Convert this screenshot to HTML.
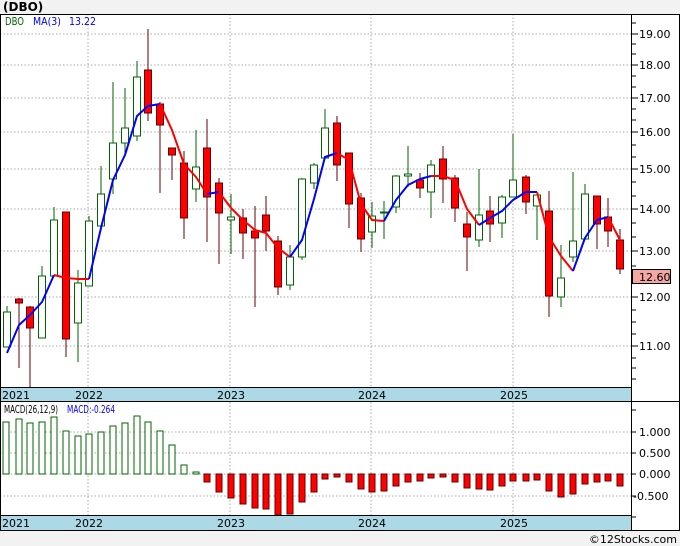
<!DOCTYPE html>
<html><head><meta charset="utf-8"><style>
html,body{margin:0;padding:0;background:#f2f2f2;}
svg{display:block;font-family:"DejaVu Sans","Liberation Sans",sans-serif;}
</style></head><body>
<svg width="680" height="546" viewBox="0 0 680 546" xmlns="http://www.w3.org/2000/svg">
<rect x="0" y="0" width="680" height="546" fill="#f2f2f2"/>
<text x="3" y="11" font-size="12" font-weight="bold" fill="#000">(DBO)</text>
<rect x="0" y="14" width="680" height="517" fill="#fff"/>
<g stroke="#aaa" stroke-dasharray="1.5,2" stroke-width="1">
<line x1="0" y1="34" x2="631" y2="34"/><line x1="0" y1="65" x2="631" y2="65"/><line x1="0" y1="98" x2="631" y2="98"/><line x1="0" y1="132" x2="631" y2="132"/><line x1="0" y1="169" x2="631" y2="169"/><line x1="0" y1="209" x2="631" y2="209"/><line x1="0" y1="251" x2="631" y2="251"/><line x1="0" y1="297" x2="631" y2="297"/><line x1="0" y1="346" x2="631" y2="346"/>
<line x1="88" y1="14" x2="88" y2="387"/><line x1="230" y1="14" x2="230" y2="387"/><line x1="371" y1="14" x2="371" y2="387"/><line x1="513" y1="14" x2="513" y2="387"/>
<line x1="0" y1="432" x2="631" y2="432"/><line x1="0" y1="453" x2="631" y2="453"/><line x1="0" y1="474" x2="631" y2="474"/><line x1="0" y1="496" x2="631" y2="496"/>
<line x1="88" y1="402" x2="88" y2="515"/><line x1="230" y1="402" x2="230" y2="515"/><line x1="371" y1="402" x2="371" y2="515"/><line x1="513" y1="402" x2="513" y2="515"/>
</g>
<g stroke="#006400" stroke-width="1" fill="#fff">
<line x1="7" y1="306" x2="7" y2="347"/><rect x="3.5" y="312" width="7" height="35"/>
<line x1="42" y1="266" x2="42" y2="338"/><rect x="38.5" y="276" width="7" height="62"/>
<line x1="54" y1="207" x2="54" y2="276"/><rect x="50.5" y="220" width="7" height="56"/>
<line x1="78" y1="270" x2="78" y2="362"/><rect x="74.5" y="283" width="7" height="40"/>
<line x1="89" y1="216" x2="89" y2="286"/><rect x="85.5" y="221" width="7" height="65"/>
<line x1="101" y1="166" x2="101" y2="226"/><rect x="97.5" y="194" width="7" height="32"/>
<line x1="113" y1="82" x2="113" y2="194"/><rect x="109.5" y="143" width="7" height="36"/>
<line x1="125" y1="88" x2="125" y2="153"/><rect x="121.5" y="128" width="7" height="15"/>
<line x1="137" y1="61" x2="137" y2="141"/><rect x="133.5" y="77" width="7" height="59"/>
<line x1="196" y1="130" x2="196" y2="202"/><rect x="192.5" y="167" width="7" height="22"/>
<line x1="231" y1="194" x2="231" y2="254"/><rect x="227.5" y="217" width="7" height="3"/>
<line x1="290" y1="245" x2="290" y2="290"/><rect x="286.5" y="257" width="7" height="28"/>
<line x1="302" y1="178" x2="302" y2="260"/><rect x="298.5" y="179" width="7" height="78"/>
<line x1="314" y1="163" x2="314" y2="189"/><rect x="310.5" y="165" width="7" height="18"/>
<line x1="325" y1="109" x2="325" y2="158"/><rect x="321.5" y="128" width="7" height="30"/>
<line x1="372" y1="202" x2="372" y2="248"/><rect x="368.5" y="216" width="7" height="16"/>
<line x1="384" y1="201" x2="384" y2="239"/><rect x="380.5" y="212" width="7" height="1"/>
<line x1="396" y1="175" x2="396" y2="213"/><rect x="392.5" y="176" width="7" height="31"/>
<line x1="408" y1="146" x2="408" y2="187"/><rect x="404.5" y="174" width="7" height="2"/>
<line x1="431" y1="160" x2="431" y2="218"/><rect x="427.5" y="165" width="7" height="27"/>
<line x1="479" y1="169" x2="479" y2="247"/><rect x="475.5" y="215" width="7" height="25"/>
<line x1="502" y1="195" x2="502" y2="238"/><rect x="498.5" y="197" width="7" height="26"/>
<line x1="513" y1="134" x2="513" y2="197"/><rect x="509.5" y="180" width="7" height="17"/>
<line x1="537" y1="195" x2="537" y2="240"/><rect x="533.5" y="195" width="7" height="11"/>
<line x1="561" y1="245" x2="561" y2="307"/><rect x="557.5" y="278" width="7" height="19"/>
<line x1="573" y1="172" x2="573" y2="262"/><rect x="569.5" y="241" width="7" height="16"/>
<line x1="585" y1="184" x2="585" y2="239"/><rect x="581.5" y="194" width="7" height="45"/>
</g>
<g stroke="#600" stroke-width="1" fill="#f00">
<line x1="19" y1="298" x2="19" y2="368"/><rect x="15.5" y="299" width="7" height="4"/>
<line x1="30" y1="306" x2="30" y2="387"/><rect x="26.5" y="307" width="7" height="21"/>
<line x1="66" y1="212" x2="66" y2="357"/><rect x="62.5" y="212" width="7" height="127"/>
<line x1="148" y1="29" x2="148" y2="121"/><rect x="144.5" y="70" width="7" height="43"/>
<line x1="160" y1="102" x2="160" y2="193"/><rect x="156.5" y="104" width="7" height="21"/>
<line x1="172" y1="148" x2="172" y2="180"/><rect x="168.5" y="148" width="7" height="7"/>
<line x1="184" y1="151" x2="184" y2="239"/><rect x="180.5" y="163" width="7" height="55"/>
<line x1="207" y1="119" x2="207" y2="242"/><rect x="203.5" y="148" width="7" height="49"/>
<line x1="219" y1="178" x2="219" y2="264"/><rect x="215.5" y="183" width="7" height="30"/>
<line x1="243" y1="209" x2="243" y2="259"/><rect x="239.5" y="218" width="7" height="15"/>
<line x1="255" y1="206" x2="255" y2="307"/><rect x="251.5" y="231" width="7" height="7"/>
<line x1="266" y1="196" x2="266" y2="251"/><rect x="262.5" y="215" width="7" height="16"/>
<line x1="278" y1="236" x2="278" y2="295"/><rect x="274.5" y="241" width="7" height="46"/>
<line x1="337" y1="116" x2="337" y2="181"/><rect x="333.5" y="123" width="7" height="42"/>
<line x1="349" y1="153" x2="349" y2="228"/><rect x="345.5" y="153" width="7" height="51"/>
<line x1="361" y1="193" x2="361" y2="252"/><rect x="357.5" y="198" width="7" height="41"/>
<line x1="420" y1="173" x2="420" y2="198"/><rect x="416.5" y="180" width="7" height="8"/>
<line x1="443" y1="146" x2="443" y2="203"/><rect x="439.5" y="159" width="7" height="20"/>
<line x1="455" y1="175" x2="455" y2="222"/><rect x="451.5" y="178" width="7" height="30"/>
<line x1="467" y1="212" x2="467" y2="271"/><rect x="463.5" y="224" width="7" height="13"/>
<line x1="490" y1="196" x2="490" y2="242"/><rect x="486.5" y="211" width="7" height="13"/>
<line x1="526" y1="175" x2="526" y2="214"/><rect x="522.5" y="177" width="7" height="25"/>
<line x1="549" y1="191" x2="549" y2="317"/><rect x="545.5" y="211" width="7" height="85"/>
<line x1="597" y1="196" x2="597" y2="249"/><rect x="593.5" y="196" width="7" height="28"/>
<line x1="608" y1="198" x2="608" y2="247"/><rect x="604.5" y="217" width="7" height="14"/>
<line x1="620" y1="229" x2="620" y2="274"/><rect x="616.5" y="240" width="7" height="29"/>
</g>
<g fill="none" stroke-width="2" stroke-linejoin="round">
<polyline stroke="#00f" points="7,353 19,325 30,315 42,302 54,275"/>
<polyline stroke="#f00" points="54,275 66,278 78,279 89,279"/>
<polyline stroke="#00f" points="89,279 101,228 113,180 125,155 137,116 148,106 160,104"/>
<polyline stroke="#f00" points="160,104 172,130 184,164 196,177 207,194"/>
<polyline stroke="#00f" points="207,194 219,192"/>
<polyline stroke="#f00" points="219,192 231,208 243,220 255,230 266,233 278,248 290,257"/>
<polyline stroke="#00f" points="290,257 302,240 314,199 325,157 337,153"/>
<polyline stroke="#f00" points="337,153 349,160 361,204 372,220 384,221"/>
<polyline stroke="#00f" points="384,221 396,200 408,185 420,179 431,176"/>
<polyline stroke="#f00" points="431,176 443,176 455,180 467,209 479,225"/>
<polyline stroke="#00f" points="479,225 490,218 502,211 513,200 526,192 537,192"/>
<polyline stroke="#f00" points="537,192 549,237 561,256 573,271"/>
<polyline stroke="#00f" points="573,271 585,238 597,220 608,217"/>
<polyline stroke="#f00" points="608,217 620,240"/>
</g>
<g stroke="#006400" fill="#fff">
<rect x="3" y="422" width="6" height="52"/><rect x="16" y="419" width="6" height="55"/><rect x="27" y="423" width="6" height="51"/><rect x="39" y="422" width="6" height="52"/><rect x="51" y="417" width="6" height="57"/><rect x="63" y="431" width="6" height="43"/><rect x="75" y="436" width="6" height="38"/><rect x="86" y="434" width="6" height="40"/><rect x="98" y="432" width="6" height="42"/><rect x="110" y="426" width="6" height="48"/><rect x="122" y="423" width="6" height="51"/><rect x="134" y="416" width="6" height="58"/><rect x="145" y="422" width="6" height="52"/><rect x="157" y="431" width="6" height="43"/><rect x="169" y="445" width="6" height="29"/><rect x="181" y="465" width="6" height="9"/><rect x="193" y="472" width="6" height="2"/>
</g>
<g stroke="#600" fill="#f00">
<rect x="204" y="474" width="6" height="8"/><rect x="216" y="474" width="6" height="18"/><rect x="228" y="474" width="6" height="24"/><rect x="240" y="474" width="6" height="30"/><rect x="252" y="474" width="6" height="34"/><rect x="263" y="474" width="6" height="35"/><rect x="275" y="474" width="6" height="41"/><rect x="287" y="474" width="6" height="40"/><rect x="299" y="474" width="6" height="28"/><rect x="311" y="474" width="6" height="18"/><rect x="322" y="474" width="6" height="5"/><rect x="334" y="474" width="6" height="3"/><rect x="346" y="474" width="6" height="8"/><rect x="358" y="474" width="6" height="15"/><rect x="369" y="474" width="6" height="18"/><rect x="381" y="474" width="6" height="17"/><rect x="393" y="474" width="6" height="12"/><rect x="405" y="474" width="6" height="8"/><rect x="417" y="474" width="6" height="7"/><rect x="428" y="474" width="6" height="4"/><rect x="440" y="474" width="6" height="3"/><rect x="452" y="474" width="6" height="8"/><rect x="464" y="474" width="6" height="14"/><rect x="476" y="474" width="6" height="15"/><rect x="487" y="474" width="6" height="16"/><rect x="499" y="474" width="6" height="12"/><rect x="510" y="474" width="6" height="7"/><rect x="523" y="474" width="6" height="7"/><rect x="534" y="474" width="6" height="6"/><rect x="546" y="474" width="6" height="17"/><rect x="558" y="474" width="6" height="23"/><rect x="570" y="474" width="6" height="20"/><rect x="582" y="474" width="6" height="10"/><rect x="594" y="474" width="6" height="8"/><rect x="605" y="474" width="6" height="7"/><rect x="617" y="474" width="6" height="12"/>
</g>
<rect x="0" y="387" width="631" height="15" fill="#add8e6"/>
<rect x="0" y="515" width="631" height="15" fill="#add8e6"/>
<g stroke="#000" stroke-width="1">
<line x1="0" y1="14.5" x2="680" y2="14.5"/>
<line x1="0" y1="387.5" x2="631" y2="387.5"/>
<line x1="0" y1="401.5" x2="680" y2="401.5"/>
<line x1="0" y1="515.5" x2="631" y2="515.5"/>
<line x1="0" y1="530.5" x2="680" y2="530.5"/>
<line x1="631.5" y1="14" x2="631.5" y2="531"/>
<line x1="679.5" y1="14" x2="679.5" y2="531"/>
<line x1="0.5" y1="14" x2="0.5" y2="531"/>
</g>
<g stroke="#000">
<line x1="631" y1="23" x2="636" y2="23"/><line x1="631" y1="44" x2="636" y2="44"/><line x1="631" y1="54" x2="636" y2="54"/><line x1="631" y1="76" x2="636" y2="76"/><line x1="631" y1="87" x2="636" y2="87"/><line x1="631" y1="109" x2="636" y2="109"/><line x1="631" y1="120" x2="636" y2="120"/><line x1="631" y1="145" x2="636" y2="145"/><line x1="631" y1="157" x2="636" y2="157"/><line x1="631" y1="182" x2="636" y2="182"/><line x1="631" y1="196" x2="636" y2="196"/><line x1="631" y1="223" x2="636" y2="223"/><line x1="631" y1="237" x2="636" y2="237"/><line x1="631" y1="266" x2="636" y2="266"/><line x1="631" y1="310" x2="636" y2="310"/><line x1="631" y1="322" x2="636" y2="322"/><line x1="631" y1="334" x2="636" y2="334"/><line x1="631" y1="358" x2="636" y2="358"/><line x1="631" y1="368" x2="636" y2="368"/><line x1="631" y1="379" x2="636" y2="379"/>
<line x1="631" y1="34" x2="638" y2="34"/><line x1="631" y1="65" x2="638" y2="65"/><line x1="631" y1="98" x2="638" y2="98"/><line x1="631" y1="132" x2="638" y2="132"/><line x1="631" y1="169" x2="638" y2="169"/><line x1="631" y1="209" x2="638" y2="209"/><line x1="631" y1="251" x2="638" y2="251"/><line x1="631" y1="297" x2="638" y2="297"/><line x1="631" y1="346" x2="638" y2="346"/>
<line x1="631" y1="432" x2="636" y2="432"/><line x1="631" y1="453" x2="636" y2="453"/><line x1="631" y1="474" x2="636" y2="474"/><line x1="631" y1="496" x2="636" y2="496"/><line x1="631" y1="410" x2="636" y2="410"/><line x1="631" y1="517" x2="636" y2="517"/>
</g>
<g font-size="11" fill="#000">
<text x="639" y="38">19.00</text><text x="639" y="69">18.00</text><text x="639" y="102">17.00</text><text x="639" y="136">16.00</text><text x="639" y="173">15.00</text><text x="639" y="213">14.00</text><text x="639" y="255">13.00</text><text x="639" y="301">12.00</text><text x="639" y="350">11.00</text>
<text x="639" y="436">1.000</text><text x="639" y="457">0.500</text><text x="639" y="478">0.000</text><text x="633" y="500">-0.500</text>
</g>
<rect x="632.5" y="269.5" width="38" height="14" fill="#f4a6a0" stroke="#000"/>
<text x="639" y="281" font-size="11" fill="#000">12.60</text>
<g font-size="11" fill="#000">
<text x="2" y="399">2021</text><text x="75" y="399">2022</text><text x="217" y="399">2023</text><text x="358" y="399">2024</text><text x="500" y="399">2025</text>
<text x="2" y="527">2021</text><text x="75" y="527">2022</text><text x="217" y="527">2023</text><text x="358" y="527">2024</text><text x="500" y="527">2025</text>
</g>
<text x="5" y="25" font-size="11" fill="#006400" textLength="19" lengthAdjust="spacingAndGlyphs">DBO</text>
<text x="33" y="25" font-size="11" fill="#00f" textLength="28" lengthAdjust="spacingAndGlyphs">MA(3)</text>
<text x="69" y="25" font-size="11" fill="#00f" textLength="27" lengthAdjust="spacingAndGlyphs">13.22</text>
<text x="4" y="413" font-size="11" fill="#000" textLength="54" lengthAdjust="spacingAndGlyphs">MACD(26,12,9)</text>
<text x="67" y="413" font-size="11" fill="#00f" textLength="48" lengthAdjust="spacingAndGlyphs">MACD:-0.264</text>
<text x="677" y="543" font-size="11" fill="#000" text-anchor="end">©12Stocks.com</text>
</svg>
</body></html>
